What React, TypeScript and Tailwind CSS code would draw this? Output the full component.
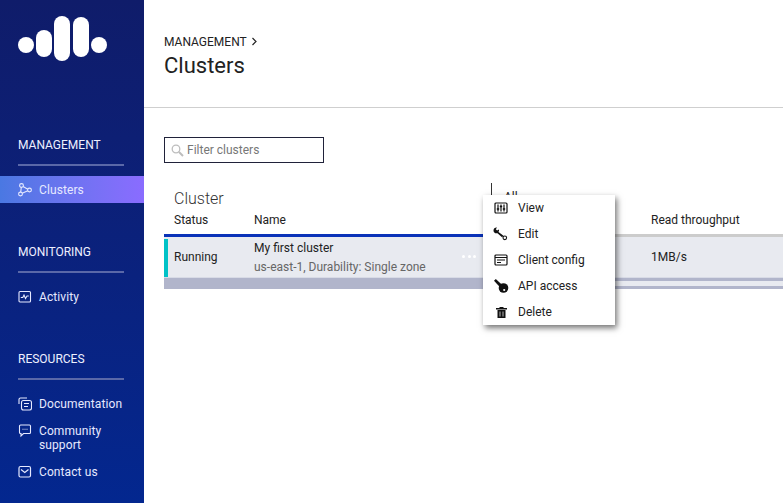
import React from "react";

const Logo = () => (
  <svg width="90" height="46" viewBox="0 0 90 46" className="block" fill="#fff">
    <rect x="0" y="21" width="16" height="16" rx="8" />
    <rect x="18" y="14" width="16" height="27" rx="8" />
    <rect x="36" y="0" width="16" height="45" rx="8" />
    <rect x="55" y="1" width="16" height="40" rx="8" />
    <rect x="73" y="21" width="16" height="16" rx="8" />
  </svg>
);

const ClustersIcon = () => (
  <svg width="14" height="14" viewBox="0 0 14 14" fill="none" stroke="#e6e9ff" strokeWidth="1.100">
    <circle cx="3.500" cy="2.500" r="1.900" />
    <circle cx="2.500" cy="11" r="1.900" />
    <circle cx="11.500" cy="7" r="1.900" />
    <path d="M3.300 4.400 2.700 9.100M5.100 3.600 9.800 6.200M4.200 10.200 9.800 7.800" />
  </svg>
);
const ActivityIcon = () => (
  <svg width="14" height="14" viewBox="0 0 14 14" fill="none" stroke="#e6e9ff" strokeWidth="1.100">
    <rect x="1" y="1.500" width="11.500" height="10.500" rx="1" />
    <path d="M2.800 7.500h2l1.200-2.500 1.500 3.500L9 6h1.800" />
  </svg>
);
const DocsIcon = () => (
  <svg width="14" height="14" viewBox="0 0 14 14" fill="none" stroke="#e6e9ff" strokeWidth="1.100">
    <path d="M1 7V2.500A1.500 1.500 0 0 1 2.500 1H9" />
    <rect x="3.500" y="3.500" width="10" height="9.500" rx="2" />
    <path d="M6 6.500h5M6 9.500h4" />
  </svg>
);
const ChatIcon = () => (
  <svg width="14" height="14" viewBox="0 0 14 14" fill="none" stroke="#e6e9ff" strokeWidth="1.100">
    <path d="M2.500 1h9a1 1 0 0 1 1 1v6.500a1 1 0 0 1-1 1H5.500L3 12V9.500h-.500a1 1 0 0 1-1-1V2a1 1 0 0 1 1-1z" />
    <path d="M4.500 5.300h1M6.500 5.300h1M8.500 5.300h1" />
  </svg>
);
const MailIcon = () => (
  <svg width="14" height="14" viewBox="0 0 14 14" fill="none" stroke="#e6e9ff" strokeWidth="1.200">
    <rect x="1" y="1.500" width="11.500" height="10.500" rx="1.500" />
    <path d="M3 4.500 6.750 7.500l3.750-3" />
  </svg>
);

const ViewIcon = () => (
  <svg width="14" height="12" viewBox="0 0 14 12" fill="none" stroke="#111" strokeWidth="1.200">
    <rect x="1" y="1" width="12" height="10" rx="1" />
    <path d="M4 2.500v7M7 2.500v7M10 2.500v7" />
    <path d="M2.800 7h2.400M5.800 4.500h2.400M8.800 7h2.400" strokeWidth="1.400" />
  </svg>
);
const EditIcon = () => (
  <svg width="16" height="14" viewBox="0 0 16 14" fill="#111">
    <path d="M.5 3.500C.5 1.500 2 .3 4 .5L2.800 2.200l1.300 1.400 1.800-1.100c.300 1 .1 1.700-.4 2.400L10.500 8.700 9 10.300 4.500 6.200c-2 .6-4-.5-4-2.700z" />
    <circle cx="11.800" cy="10.800" r="1.800" fill="none" stroke="#111" strokeWidth="1.100" />
  </svg>
);
const ConfigIcon = () => (
  <svg width="14" height="12" viewBox="0 0 14 12" fill="none" stroke="#111" strokeWidth="1.200">
    <rect x="1" y="1" width="12" height="10" rx="1" />
    <path d="M1 3.500h12M3 6h8M3 8.500h4" />
  </svg>
);
const KeyIcon = () => (
  <svg width="15" height="15" viewBox="0 0 15 15" fill="#111">
    <path d="M0 1.800 1.800 0l7 6.500-2.300 2.300z" />
    <circle cx="9.500" cy="9" r="4.800" />
    <circle cx="10.200" cy="11" r="1.100" fill="#fff" />
  </svg>
);
const TrashIcon = () => (
  <svg width="11" height="11" viewBox="0 0 11 11" fill="#111">
    <rect x="0" y="1" width="11" height="1.500" />
    <rect x="3.500" y="0" width="4" height="1.500" />
    <path d="M1.500 3h8v8h-8z" />
    <path d="M4 4.500v5M7 4.500v5" stroke="#fff" strokeWidth=".7" />
  </svg>
);

function NavSection({ title, children, cls }: { title: string; children: React.ReactNode; cls: string }) {
  return (
    <div className={cls}>
      <div className="ml-[18px] mr-[20px] h-[28px] border-b-2 border-[#5a68a8] text-[12px] leading-[14px] text-[#eef0ff]">{title}</div>
      {children}
    </div>
  );
}

function NavItem({ icon, label, active, cls }: { icon: React.ReactNode; label: React.ReactNode; active?: boolean; cls?: string }) {
  return (
    <div
      className={`flex items-center gap-[7px] pl-[18px] text-[12px] leading-[14px] text-[#e6e9ff] ${
        active ? "h-[27px] bg-gradient-to-r from-[#4a78e2] to-[#8a6cff]" : ""
      } ${cls ?? ""}`}
    >
      <span className="flex w-[14px] shrink-0">{icon}</span>
      <span className="tracking-[0.1px]">{label}</span>
    </div>
  );
}

function MenuItem({ icon, label }: { icon: React.ReactNode; label: string }) {
  return (
    <div className="flex h-[26px] items-center text-[12px] text-[#222]">
      <span className="flex w-[35px] justify-center pl-[1px]">{icon}</span>
      <span>{label}</span>
    </div>
  );
}

export default function App() {
  return (
    <div
      className="flex h-[503px] w-[783px] overflow-hidden bg-white text-[#222]"
      style={{ fontFamily: "Roboto, sans-serif" }}
    >
      <aside className="flex w-[144px] shrink-0 flex-col bg-gradient-to-b from-[#0f1c6a] to-[#03278f]">
        <div className="ml-[18px] mt-[16px]">
          <Logo />
        </div>
        <NavSection title="MANAGEMENT" cls="mt-[76px]">
          <NavItem active icon={<ClustersIcon />} label="Clusters" cls="mt-[10px]" />
        </NavSection>
        <NavSection title="MONITORING" cls="mt-[42px]">
          <NavItem icon={<ActivityIcon />} label="Activity" cls="mt-[17px]" />
        </NavSection>
        <NavSection title="RESOURCES" cls="mt-[48px]">
          <NavItem icon={<DocsIcon />} label="Documentation" cls="mt-[17px]" />
          <div className="mt-[13px] flex gap-[7px] pl-[18px] text-[12px] leading-[14px] text-[#e6e9ff]">
            <span className="flex w-[14px] shrink-0"><ChatIcon /></span>
            <span className="tracking-[0.1px]">Community<br />support</span>
          </div>
          <NavItem icon={<MailIcon />} label="Contact us" cls="mt-[13px]" />
        </NavSection>
      </aside>

      <main className="min-w-0 flex-1">
        <header className="h-[108px] border-b border-[#cfcfcf] pl-[20px] pt-[35px]">
          <div className="flex items-center gap-[4px] text-[12px] leading-[14px] text-[#222]">
            MANAGEMENT
            <svg width="7" height="9" viewBox="0 0 7 9" fill="none" stroke="#222" strokeWidth="1.200" className="-mt-[2px]"><path d="M1.500 1 5 4.500 1.500 8" /></svg>
          </div>
          <h1 className="mt-[2px] text-[22px] leading-[30px] text-[#222]">Clusters</h1>
        </header>

        <div className="pl-[20px] pt-[29px]">
          <div className="flex h-[26px] w-[160px] items-center border border-[#20223a] pl-[6px] text-[12px] text-[#777]">
            <svg width="13" height="13" viewBox="0 0 13 13" fill="none" stroke="#bdbdbd" className="mr-[3px]">
              <circle cx="5" cy="5" r="3.800" strokeWidth="1.300" />
              <path d="m8 8 4 4" strokeWidth="2" />
            </svg>
            Filter clusters
          </div>

          <div className="relative mt-[20px]">
            <div className="relative h-[51px]">
              <div className="pl-[10px] pt-[6px] text-[16px] font-light leading-[19px] text-[#333]">Cluster</div>
              <div className="mt-[5px] flex text-[12px] leading-[14px] text-[#222]">
                <span className="w-[90px] pl-[10px]">Status</span>
                <span className="w-[397px]">Name</span>
                <span>Read throughput</span>
              </div>
              <div className="absolute left-[327px] top-0 h-[14px] w-px bg-[#333]" />
              <div className="absolute left-[340px] top-[5px] text-[12px] text-[#222]">All</div>
            </div>
            <div className="flex h-[3px]">
              <div className="w-[340px] bg-[#0a32b8]" />
              <div className="flex-1 bg-[#cccccc]" />
            </div>
            <div className="flex h-[40px] items-stretch bg-[#e8eaf0]">
              <div className="mt-[2px] w-[4px] bg-[#00c2c7]" />
              <div className="flex w-[86px] items-center pl-[6px] text-[12px]">Running</div>
              <div className="flex w-[397px] flex-col justify-center">
                <div className="text-[12px] leading-[14px]">My first cluster</div>
                <div className="mt-[5px] text-[12px] leading-[14px] text-[#666]">us-east-1, Durability: Single zone</div>
              </div>
              <div className="flex items-center text-[12px]">1MB/s</div>
            </div>
            <div className="h-[1px] bg-[#d8dbe6]" />
            <div className="flex h-[11px] flex-col justify-between bg-[#e8eaf0]">
              <div className="h-[3px] bg-[#b1b5cb]" />
              <div className="h-[3px] bg-[#b1b5cb]" />
            </div>
            <div className="absolute left-0 top-[95px] h-[11px] w-[330px] bg-[#b1b5cb]" />
            <div className="absolute left-[298px] top-[72px] flex gap-[2.500px]">
              <span className="size-[3px] rounded-full bg-white" />
              <span className="size-[3px] rounded-full bg-white" />
              <span className="size-[3px] rounded-full bg-white" />
            </div>

            <div className="absolute left-[319px] top-[12px] w-[132px] bg-white shadow-[2px_3px_6px_rgba(0,0,0,0.55)]">
              <MenuItem icon={<ViewIcon />} label="View" />
              <MenuItem icon={<EditIcon />} label="Edit" />
              <MenuItem icon={<ConfigIcon />} label="Client config" />
              <MenuItem icon={<KeyIcon />} label="API access" />
              <MenuItem icon={<TrashIcon />} label="Delete" />
            </div>
          </div>
        </div>
      </main>
    </div>
  );
}
